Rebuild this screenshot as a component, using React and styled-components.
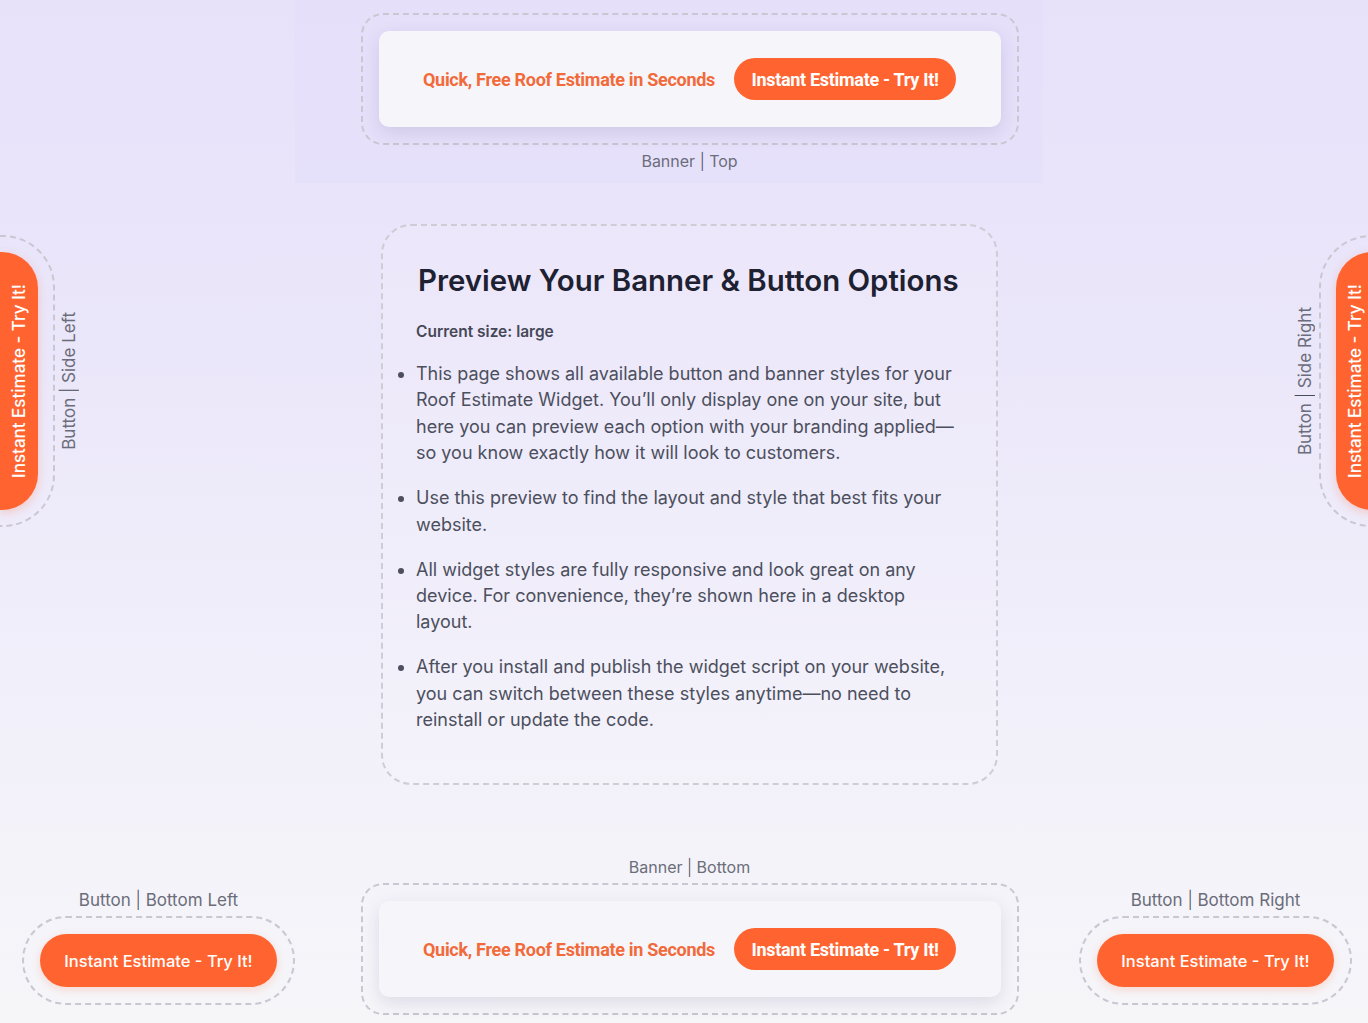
import React from "react";
import styled, { createGlobalStyle } from "styled-components";

const GlobalStyle = createGlobalStyle`
  html, body {
    margin: 0;
    padding: 0;
  }
  body {
    font-family: Inter, "Noto Sans", sans-serif;
    -webkit-font-smoothing: antialiased;
  }
  * {
    box-sizing: border-box;
  }
`;

const bullets = [
  "This page shows all available button and banner styles for your Roof Estimate Widget. You\u2019ll only display one on your site, but here you can preview each option with your branding applied\u2014so you know exactly how it will look to customers.",
  "Use this preview to find the layout and style that best fits your website.",
  "All widget styles are fully responsive and look great on any device. For convenience, they\u2019re shown here in a desktop layout.",
  "After you install and publish the widget script on your website, you can switch between these styles anytime\u2014no need to reinstall or update the code.",
];

const Caption = ({ left, right, size }) => (
  <Label $size={size}>
    {left} <Bar>|</Bar> {right}
  </Label>
);

const Banner = () => (
  <Frame $radius="22px" $pad="16px">
    <BannerCard>
      <BannerText>Quick, Free Roof Estimate in Seconds</BannerText>
      <BannerButton>Instant Estimate - Try It!</BannerButton>
    </BannerCard>
  </Frame>
);

const SideWidget = ({ side }) => (
  <SideWrap $side={side}>
    <SideFrame $side={side}>
      <SideButton $side={side}>
        <span>Instant Estimate - Try It!</span>
      </SideButton>
    </SideFrame>
    <SideLabel $size="17px">
      Button <Bar>|</Bar> {side === "left" ? "Side Left" : "Side Right"}
    </SideLabel>
  </SideWrap>
);

const CornerWidget = ({ title }) => (
  <Stack>
    <Caption left="Button" right={title} size="17px" />
    <Frame $radius="44px" $pad="16px">
      <PillButton>Instant Estimate - Try It!</PillButton>
    </Frame>
  </Stack>
);

export default function App() {
  return (
    <>
      <GlobalStyle />
      <Page>
        <TopStrip>
          <Stack>
            <Banner />
            <Caption left="Banner" right="Top" />
          </Stack>
        </TopStrip>

        <MiddleRow>
          <SideCell>
            <SideWidget side="left" />
          </SideCell>
          <InfoCard>
            <Heading>Preview Your Banner &amp; Button Options</Heading>
            <SizeNote>Current size: large</SizeNote>
            <List>
              {bullets.map((text, index) => (
                <li key={index}>{text}</li>
              ))}
            </List>
          </InfoCard>
          <SideCell $right>
            <SideWidget side="right" />
          </SideCell>
        </MiddleRow>

        <BottomRow>
          <CornerCell>
            <CornerWidget title="Bottom Left" />
          </CornerCell>
          <BottomCenter>
            <Stack>
              <Caption left="Banner" right="Bottom" />
              <Banner />
            </Stack>
          </BottomCenter>
          <CornerCell $right>
            <CornerWidget title="Bottom Right" />
          </CornerCell>
        </BottomRow>
      </Page>
    </>
  );
}

const Page = styled.div`
  width: 100%;
  height: 1023px;
  overflow: hidden;
  display: flex;
  flex-direction: column;
  background: linear-gradient(
    180deg,
    #e7e1fa 0%,
    #ebe7fa 35%,
    #f1effa 65%,
    #f6f6f9 100%
  );
`;

const TopStrip = styled.div`
  width: 748px;
  height: 183px;
  margin-left: 295px;
  padding: 13px 25px 0 66px;
  background: rgba(228, 222, 249, 0.55);
`;

const Stack = styled.div`
  display: flex;
  flex-direction: column;
  align-items: center;
  gap: 6px;
`;

const Frame = styled.div`
  display: flex;
  justify-content: center;
  align-items: center;
  padding: ${(p) => p.$pad};
  border: 2px dashed #cac7d2;
  border-radius: ${(p) => p.$radius};
`;

const BannerCard = styled.div`
  width: 622px;
  height: 96px;
  display: flex;
  align-items: center;
  justify-content: center;
  gap: 19px;
  background: #f6f6fa;
  border-radius: 10px;
  box-shadow: 0 6px 18px rgba(60, 50, 110, 0.13);
`;

const BannerText = styled.span`
  font-family: Roboto, "Liberation Sans", sans-serif;
  font-weight: 700;
  font-size: 18px;
  letter-spacing: -0.3px;
  color: #f26a3a;
`;

const BannerButton = styled.button`
  width: 222px;
  height: 42px;
  border: none;
  border-radius: 21px;
  background: #ff6430;
  color: #ffffff;
  font-family: Roboto, "Liberation Sans", sans-serif;
  font-weight: 700;
  font-size: 18px;
  letter-spacing: -0.3px;
  padding: 0;
`;

const Label = styled.div`
  font-size: ${(p) => p.$size || "16px"};
  line-height: 20px;
  color: #6b6d7a;
  white-space: nowrap;
`;

const Bar = styled.span`
  color: #4a4c58;
  font-weight: 300;
`;

const MiddleRow = styled.div`
  flex: 1;
  display: grid;
  grid-template-columns: 381px 617px 1fr;
  align-items: start;
`;

const SideCell = styled.div`
  display: flex;
  justify-content: ${(p) => (p.$right ? "flex-end" : "flex-start")};
  margin-top: 52px;
  margin-right: ${(p) => (p.$right ? "-6px" : "0")};
`;

const SideWrap = styled.div`
  display: flex;
  flex-direction: ${(p) => (p.$side === "left" ? "row" : "row-reverse")};
  align-items: center;
  gap: 4px;
`;

const SideFrame = styled.div`
  display: flex;
  padding: ${(p) => (p.$side === "left" ? "15px 15px 15px 0" : "15px 0 15px 15px")};
  border: 2px dashed #cac7d2;
  border-${(p) => (p.$side === "left" ? "left" : "right")}: none;
  border-radius: ${(p) => (p.$side === "left" ? "0 52px 52px 0" : "52px 0 0 52px")};
`;

const SideButton = styled.div`
  width: 38px;
  height: 258px;
  display: flex;
  align-items: center;
  justify-content: center;
  background: #ff6430;
  color: #ffffff;
  font-size: 17px;
  font-weight: 500;
  border-radius: ${(p) => (p.$side === "left" ? "0 36px 36px 0" : "36px 0 0 36px")};
  box-shadow: 0 3px 10px rgba(255, 100, 48, 0.25);

  span {
    display: inline-block;
    writing-mode: vertical-rl;
    transform: rotate(180deg);
    white-space: nowrap;
  }
`;

const SideLabel = styled(Label)`
  writing-mode: vertical-rl;
  transform: rotate(180deg);
`;

const InfoCard = styled.div`
  margin-top: 41px;
  height: 561px;
  padding: 36px 38px 0 33px;
  border: 2px dashed #cfccd6;
  border-radius: 30px;
  background: rgba(255, 255, 255, 0.1);
`;

const Heading = styled.h1`
  margin: 0 0 22px 2px;
  text-align: center;
  font-size: 29.4px;
  line-height: 38px;
  font-weight: 600;
  color: #1d2131;
  white-space: nowrap;
`;

const SizeNote = styled.div`
  font-size: 15.5px;
  line-height: 20px;
  font-weight: 600;
  color: #454857;
  margin-bottom: 19px;
`;

const List = styled.ul`
  margin: 0;
  padding-left: 0;
  list-style: disc;
  color: #4c4f5d;
  font-size: 18px;
  line-height: 26.4px;

  li {
    margin-left: 0;
    margin-bottom: 18.6px;
  }
`;

const BottomRow = styled.div`
  display: grid;
  grid-template-columns: 361px 657px 1fr;
  align-items: end;
`;

const CornerCell = styled.div`
  display: flex;
  justify-content: ${(p) => (p.$right ? "flex-end" : "flex-start")};
  padding: ${(p) => (p.$right ? "0 16px 18px 0" : "0 0 18px 22px")};
`;

const BottomCenter = styled.div`
  padding-bottom: 8px;
`;

const PillButton = styled.button`
  width: 237px;
  height: 53px;
  border: none;
  border-radius: 27px;
  background: #ff6430;
  color: #ffffff;
  font-family: Inter, "Noto Sans", sans-serif;
  font-size: 16.5px;
  font-weight: 500;
  padding: 0;
  box-shadow: 0 3px 10px rgba(255, 100, 48, 0.2);
`;
